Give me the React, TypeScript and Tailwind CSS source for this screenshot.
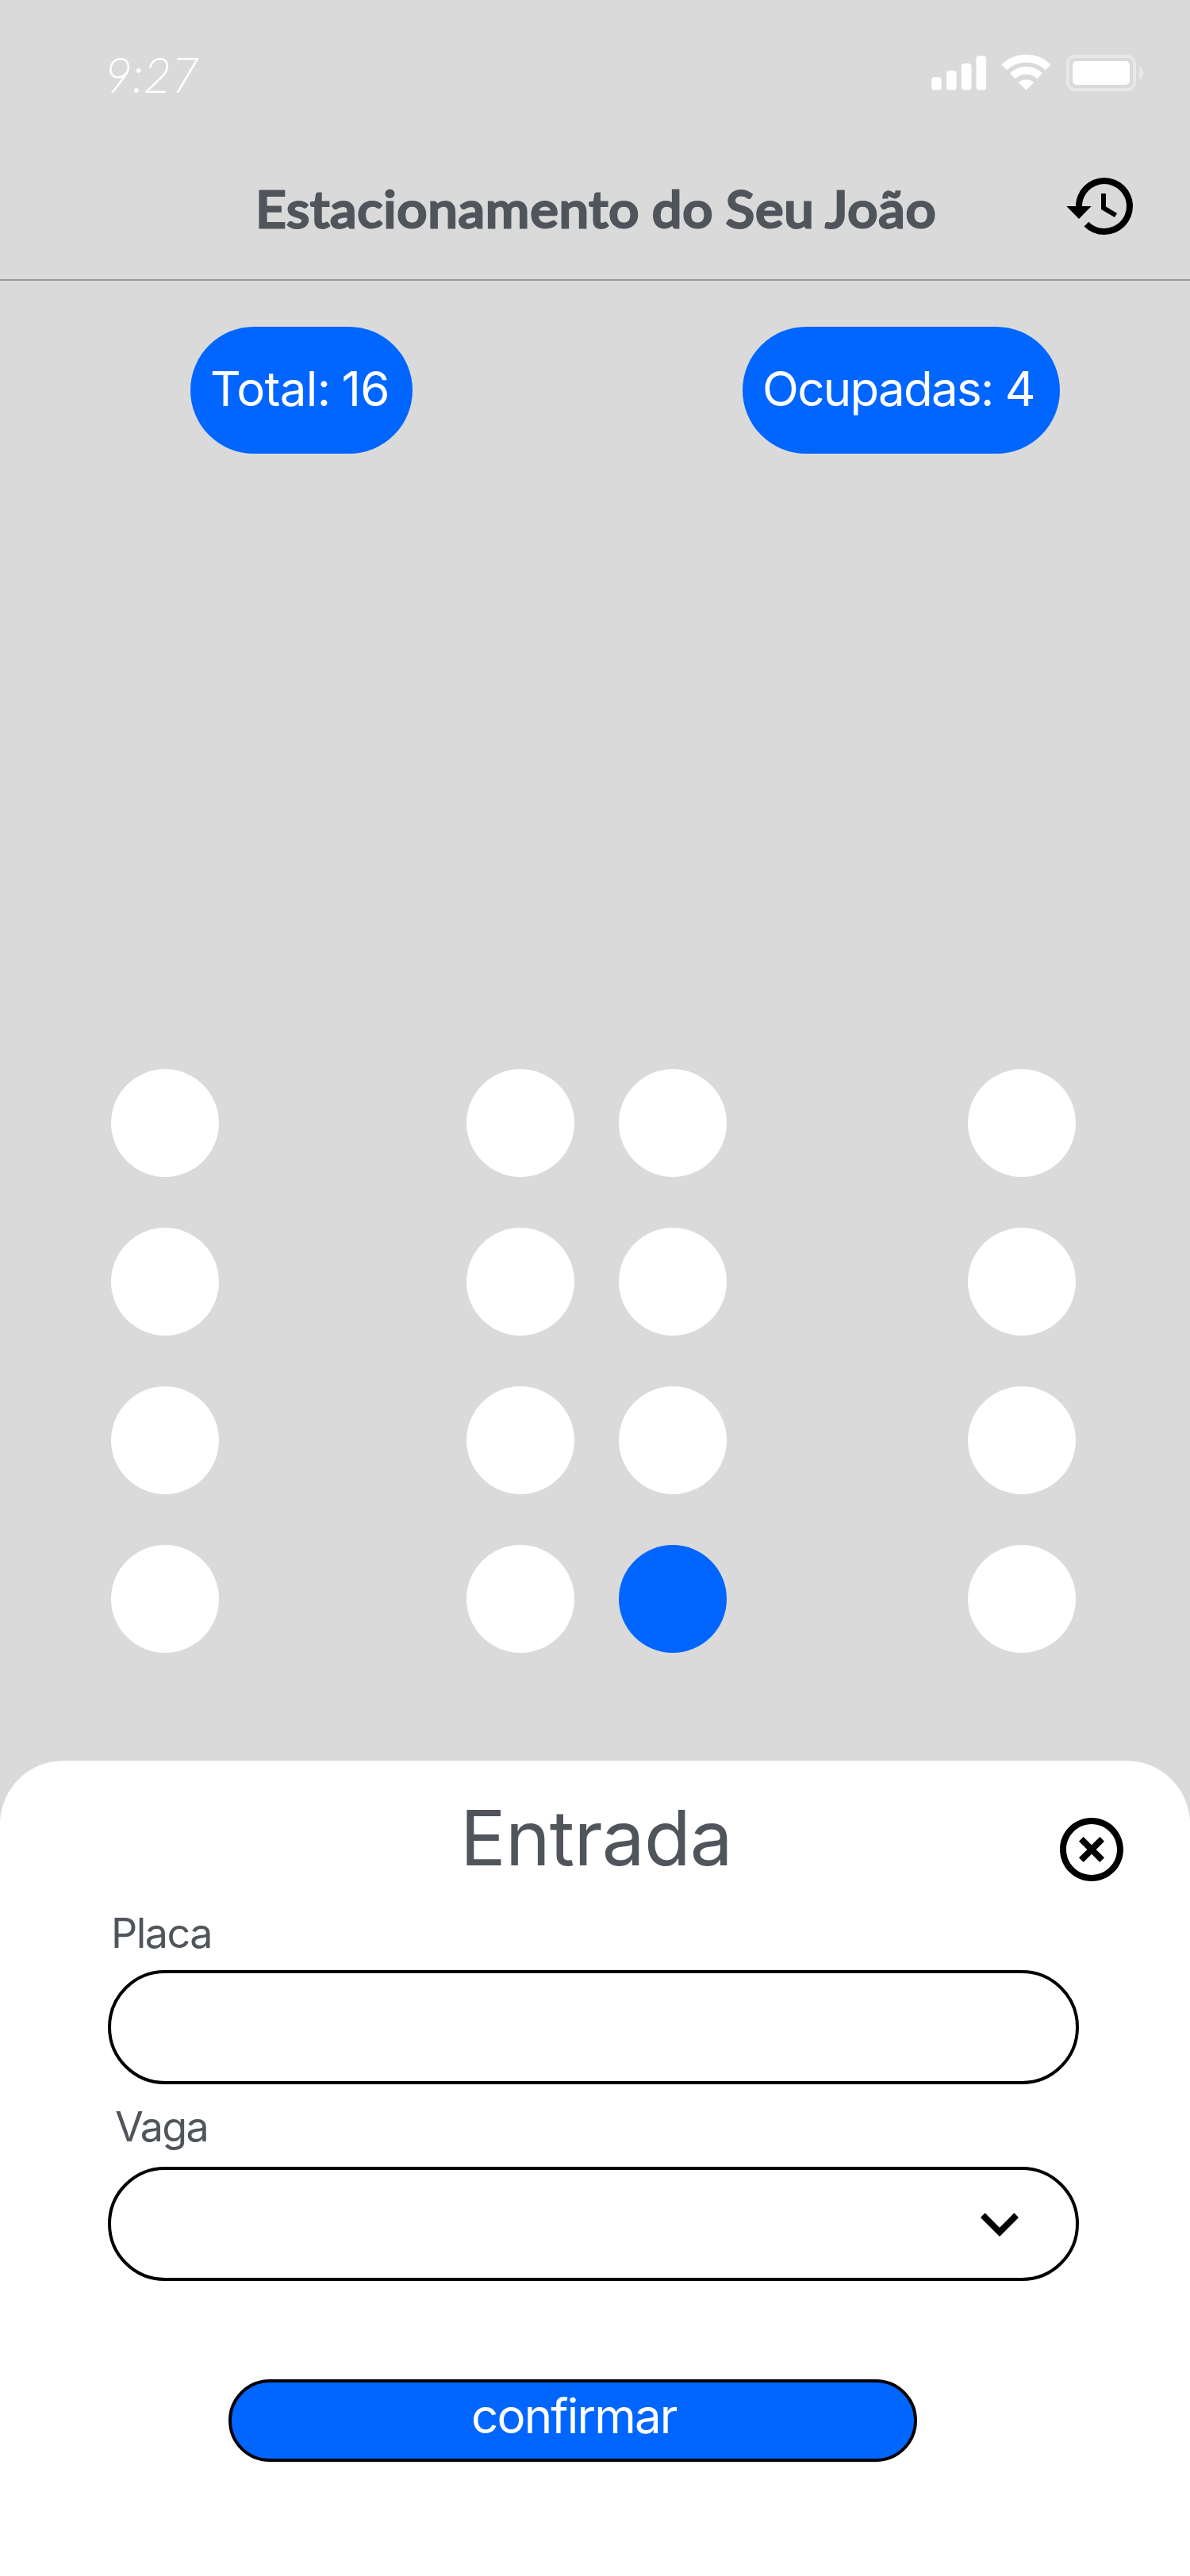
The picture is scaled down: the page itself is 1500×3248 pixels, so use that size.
function SignalIcon() {
  return (
    <svg width="70" height="44" viewBox="0 0 70 44" fill="#fff" aria-hidden="true">
      <rect x="0.2" y="27.2" width="12.6" height="16.3" rx="4" />
      <rect x="19.1" y="19" width="12.6" height="24.5" rx="4" />
      <rect x="37.9" y="10" width="12.6" height="33.5" rx="4" />
      <rect x="56.5" y="0.5" width="12.6" height="43" rx="4" />
    </svg>
  );
}

function WifiIcon() {
  return (
    <svg width="64" height="46" viewBox="0 0 64 46" fill="#fff" stroke="#fff" strokeWidth="1.6" strokeLinejoin="round" aria-hidden="true">
      <path d="M1.6 13.6A43 43 0 0 1 61.4 13.6L55.6 19.1A36.5 36.5 0 0 0 7.4 19.1Z" />
      <path d="M12.1 24.4A28.5 28.5 0 0 1 50.9 24.4L45.1 30.1A20.5 20.5 0 0 0 17.9 30.1Z" />
      <path d="M22.7 35.8A15.5 15.5 0 0 1 40.3 35.8L31.5 44.4Z" />
    </svg>
  );
}

function BatteryIcon() {
  return (
    <svg width="98" height="46" viewBox="0 0 98 46" aria-hidden="true">
      <rect x="2" y="2" width="84" height="42" rx="9" fill="none" stroke="#e8e8e8" strokeWidth="4" />
      <rect x="8" y="8" width="72" height="30" rx="5" fill="#fff" />
      <path d="M92 15C95.300 16 97.300 19.500 97.300 23C97.300 26.500 95.300 30 92 31.300Z" fill="#e8e8e8" />
    </svg>
  );
}

function HistoryIcon() {
  return (
    <svg width="96" height="96" viewBox="0 0 24 24" fill="#000" aria-hidden="true">
      <path d="M13 3a9 9 0 0 0-9 9H1.080L5 16l3.920-4H6a7 7 0 1 1 7 7c-1.930 0-3.680-.79-4.940-2.060l-1.420 1.420A8.954 8.954 0 0 0 13 21a9 9 0 0 0 0-18zm-1 5v5l4.250 2.520.77-1.280-3.520-2.090V8z" />
    </svg>
  );
}

function CloseIcon() {
  return (
    <svg width="96" height="96" viewBox="0 0 24 24" fill="#000" aria-hidden="true">
      <path d="M14.590 8L12 10.590 9.410 8 8 9.410 10.590 12 8 14.590 9.410 16 12 13.410 14.590 16 16 14.590 13.410 12 16 9.410 14.590 8zM12 2C6.470 2 2 6.470 2 12s4.470 10 10 10 10-4.470 10-10S17.530 2 12 2zm0 18c-4.410 0-8-3.590-8-8s3.590-8 8-8 8 3.590 8 8-3.590 8-8 8z" />
    </svg>
  );
}

function ChevronIcon() {
  return (
    <svg width="96" height="96" viewBox="0 0 24 24" fill="#000" aria-hidden="true">
      <path d="M16.590 8.590L12 13.170 7.410 8.590 6 10l6 6 6-6z" />
    </svg>
  );
}

const rows = [1, 2, 3, 4];
const columns = ["A", "B", "C", "D"];
const selected = "C4";

export default function App() {
  return (
    <main className="flex h-[3248px] w-[1500px] flex-col overflow-hidden bg-[#dadada] font-['Inter',sans-serif] text-[#50555c]">
      <header className="flex h-[354px] shrink-0 flex-col border-b-2 border-[#989898]">
        <div className="flex h-[212px] items-start pl-[132px]">
          <time className="mt-[63px] w-[1042px] font-['Lato',sans-serif] text-[60px] leading-[60px] font-thin tracking-[0.3px] text-white italic [-webkit-text-stroke:1.8px_#fff]">
            9:27
          </time>
          <div className="flex items-start">
            <div className="mt-[70px]"><SignalIcon /></div>
            <div className="mt-[68px] ml-[18px]"><WifiIcon /></div>
            <div className="mt-[69px] ml-[18px]"><BatteryIcon /></div>
          </div>
        </div>
        <div className="flex items-start pl-[322px]">
          <h1 className="mt-[11px] w-[1018px] shrink-0 origin-left scale-x-[1.05] font-['Lato',sans-serif] text-[64px] leading-[80px] font-medium tracking-[0.7px] whitespace-nowrap [word-spacing:-2px] [-webkit-text-stroke:2.8px_#50555c]">
            Estacionamento do Seu João
          </h1>
          <button aria-label="Histórico" className="shrink-0"><HistoryIcon /></button>
        </div>
      </header>

      <section className="mt-[58px] flex shrink-0 justify-between pr-[164px] pl-[240px] text-[60px] leading-[80px] whitespace-nowrap text-white">
        <div className="h-[160px] w-[280px] rounded-[80px] bg-[#0066ff] pt-[38px] pl-[25px] tracking-[-0.7px] [word-spacing:-2px]">Total: 16</div>
        <div className="h-[160px] w-[400px] rounded-[80px] bg-[#0066ff] pt-[38px] pl-[25px] tracking-[-1.72px]">Ocupadas: 4</div>
      </section>

      <section className="mt-[776px] grid shrink-0 grid-cols-[448px_192px_440px_136px] gap-y-16 pl-[140px]">
        {rows.map((row) =>
          columns.map((column) => (
            <button
              key={column + row}
              aria-label={"Vaga " + column + row}
              className={column + row === selected ? "size-[136px] rounded-full bg-[#0066ff]" : "size-[136px] rounded-full bg-white"}
            />
          )),
        )}
      </section>

      <section className="mt-[136px] flex grow flex-col rounded-t-[80px] bg-white">
        <div className="flex h-[188px] shrink-0 items-start pl-[580px]">
          <h2 className="mt-[49px] w-[748px] text-[96px] leading-[96px] font-normal tracking-[-0.8px]">Entrada</h2>
          <button aria-label="Fechar" className="mt-16"><CloseIcon /></button>
        </div>
        <label className="ml-[140px] text-[52px] leading-[60px] tracking-[-1.5px]">Placa</label>
        <div className="mt-[16px] ml-[136px] h-[144px] w-[1224px] rounded-full border-4 border-black" />
        <label className="mt-[24px] ml-[145px] text-[52px] leading-[60px] tracking-[-1.6px]">Vaga</label>
        <div className="mt-[20px] ml-[136px] flex h-[144px] w-[1224px] items-center justify-end rounded-full border-4 border-black pr-12">
          <ChevronIcon />
        </div>
        <button className="mt-[124px] ml-[288px] flex h-[104px] w-[868px] items-start rounded-full border-4 border-black bg-[#0066ff] pt-0.5 pl-[302px] text-[60px] leading-[80px] tracking-[-1.8px] text-white">
          confirmar
        </button>
      </section>
    </main>
  );
}
